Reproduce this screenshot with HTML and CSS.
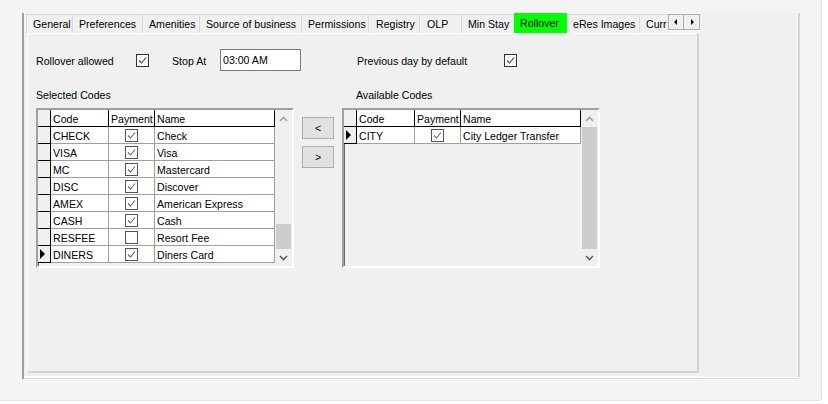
FILE: index.html
```html
<!DOCTYPE html>
<html>
<head>
<meta charset="utf-8">
<link rel="stylesheet" href="styles.css">
</head>
<body>
<div class="window">
  <div class="frame">
    <div class="tabctl">
      <div class="tabstrip">
        <div class="tabs">
          <span class="tab w-general">General</span>
          <span class="tab w-pref">Preferences</span>
          <span class="tab w-amen">Amenities</span>
          <span class="tab w-source">Source of business</span>
          <span class="tab w-perm">Permissions</span>
          <span class="tab w-reg">Registry</span>
          <span class="tab w-olp">OLP</span>
          <span class="tab w-min">Min Stay</span>
          <span class="tab w-roll active">Rollover</span>
          <span class="tab w-eres">eRes Images</span>
          <span class="tab w-curr">Curr</span>
        </div>
        <div class="tabarrows">
          <span class="tabarrow"><svg width="14" height="14" viewBox="0 0 14 14"><polygon points="8,4 8,10 5,7" fill="#000"/></svg></span>
          <span class="tabarrow"><svg width="14" height="14" viewBox="0 0 14 14"><polygon points="6,4 6,10 9,7" fill="#000"/></svg></span>
        </div>
      </div>
      <div class="page">
        <div class="toprow">
          <span class="lbl l-roll">Rollover allowed</span>
          <span class="cb"><svg width="11" height="11" viewBox="0 0 11 11"><polyline points="2,5.5 4.5,8 9,2.5" fill="none" stroke="#444" stroke-width="1.1"/></svg></span>
          <span class="lbl l-stop">Stop At</span>
          <span class="textbox">03:00 AM</span>
          <span class="lbl l-prev">Previous day by default</span>
          <span class="cb"><svg width="11" height="11" viewBox="0 0 11 11"><polyline points="2,5.5 4.5,8 9,2.5" fill="none" stroke="#444" stroke-width="1.1"/></svg></span>
        </div>
        <div class="lists">
          <div class="col">
            <div class="caption">Selected Codes</div>
            <div class="grid">
              <div class="gridbody">
                <div class="grow ghead"><span class="rh"></span><span class="c">Code</span><span class="c">Payment</span><span class="c">Name</span></div>
                <div class="grow"><span class="rh"></span><span class="c">CHECK</span><span class="c cbc"><span class="cb sm"><svg width="11" height="11" viewBox="0 0 11 11"><polyline points="2,5.5 4.5,8 9,2.5" fill="none" stroke="#666" stroke-width="1.1"/></svg></span></span><span class="c">Check</span></div>
                <div class="grow"><span class="rh"></span><span class="c">VISA</span><span class="c cbc"><span class="cb sm"><svg width="11" height="11" viewBox="0 0 11 11"><polyline points="2,5.5 4.5,8 9,2.5" fill="none" stroke="#666" stroke-width="1.1"/></svg></span></span><span class="c">Visa</span></div>
                <div class="grow"><span class="rh"></span><span class="c">MC</span><span class="c cbc"><span class="cb sm"><svg width="11" height="11" viewBox="0 0 11 11"><polyline points="2,5.5 4.5,8 9,2.5" fill="none" stroke="#666" stroke-width="1.1"/></svg></span></span><span class="c">Mastercard</span></div>
                <div class="grow"><span class="rh"></span><span class="c">DISC</span><span class="c cbc"><span class="cb sm"><svg width="11" height="11" viewBox="0 0 11 11"><polyline points="2,5.5 4.5,8 9,2.5" fill="none" stroke="#666" stroke-width="1.1"/></svg></span></span><span class="c">Discover</span></div>
                <div class="grow"><span class="rh"></span><span class="c">AMEX</span><span class="c cbc"><span class="cb sm"><svg width="11" height="11" viewBox="0 0 11 11"><polyline points="2,5.5 4.5,8 9,2.5" fill="none" stroke="#666" stroke-width="1.1"/></svg></span></span><span class="c">American Express</span></div>
                <div class="grow"><span class="rh"></span><span class="c">CASH</span><span class="c cbc"><span class="cb sm"><svg width="11" height="11" viewBox="0 0 11 11"><polyline points="2,5.5 4.5,8 9,2.5" fill="none" stroke="#666" stroke-width="1.1"/></svg></span></span><span class="c">Cash</span></div>
                <div class="grow"><span class="rh"></span><span class="c">RESFEE</span><span class="c cbc"><span class="cb sm"></span></span><span class="c">Resort Fee</span></div>
                <div class="grow"><span class="rh cur"><svg width="8" height="12" viewBox="0 0 8 12"><polygon points="2,1 7,6 2,11" fill="#000"/></svg></span><span class="c">DINERS</span><span class="c cbc"><span class="cb sm"><svg width="11" height="11" viewBox="0 0 11 11"><polyline points="2,5.5 4.5,8 9,2.5" fill="none" stroke="#666" stroke-width="1.1"/></svg></span></span><span class="c">Diners Card</span></div>
              </div>
              <div class="vscroll">
                <span class="sbtn"><svg width="9" height="6" viewBox="0 0 9 6"><polyline points="1,5 4.5,1.5 8,5" fill="none" stroke="#a0a0a0" stroke-width="1.6"/></svg></span>
                <span class="track"><span class="thumb"></span></span>
                <span class="sbtn"><svg width="9" height="6" viewBox="0 0 9 6"><polyline points="1,1 4.5,4.5 8,1" fill="none" stroke="#606060" stroke-width="1.6"/></svg></span>
              </div>
            </div>
          </div>
          <div class="movebtns">
            <span class="btn">&lt;</span>
            <span class="btn">&gt;</span>
          </div>
          <div class="col">
            <div class="caption cap-right">Available Codes</div>
            <div class="grid">
              <div class="gridbody">
                <div class="grow ghead"><span class="rh"></span><span class="c">Code</span><span class="c">Payment</span><span class="c">Name</span></div>
                <div class="grow"><span class="rh cur"><svg width="8" height="12" viewBox="0 0 8 12"><polygon points="2,1 7,6 2,11" fill="#000"/></svg></span><span class="c">CITY</span><span class="c cbc"><span class="cb sm"><svg width="11" height="11" viewBox="0 0 11 11"><polyline points="2,5.5 4.5,8 9,2.5" fill="none" stroke="#666" stroke-width="1.1"/></svg></span></span><span class="c">City Ledger Transfer</span></div>
              </div>
              <div class="vscroll">
                <span class="sbtn"><svg width="9" height="6" viewBox="0 0 9 6"><polyline points="1,5 4.5,1.5 8,5" fill="none" stroke="#a0a0a0" stroke-width="1.6"/></svg></span>
                <span class="track full"></span>
                <span class="sbtn"><svg width="9" height="6" viewBox="0 0 9 6"><polyline points="1,1 4.5,4.5 8,1" fill="none" stroke="#606060" stroke-width="1.6"/></svg></span>
              </div>
            </div>
          </div>
        </div>
      </div>
    </div>
    <div class="side"></div>
  </div>
</div>
</body>
</html>
```
FILE: styles.css
```css
* { box-sizing: border-box; }
html, body { margin: 0; padding: 0; }
body {
  background: #ffffff;
  font-family: "Liberation Sans", Arial, sans-serif;
  font-size: 10.6px;
  color: #000;
}
.window {
  width: 822px;
  height: 401px;
  background: #f4f4f4;
  border-right: 1px solid #e3e3e3;
  border-bottom: 1px solid #e3e3e3;
  border-bottom-right-radius: 3px;
  padding: 13px 0 0 22px;
}
.frame {
  display: flex;
  width: 778px;
  height: 366px;
  border-left: 2px solid #a0a0a0;
  background: #f0f0f0;
  box-shadow: inset 0 -1px 0 #dadada, inset 0 -3px 0 #ffffff;
}
.tabctl {
  width: 676px;
  display: flex;
  flex-direction: column;
}
.tabstrip {
  height: 20px;
  display: flex;
  padding-left: 2px;
  background: #f4f4f4;
}
.tabs {
  flex: 1;
  display: flex;
  overflow: hidden;
  white-space: nowrap;
  padding-top: 1px;
}
.tab {
  flex: none;
  height: 19px;
  line-height: 19px;
  padding-left: 6px;
  background: #f0f0f0;
  border: 1px solid #d9d9d9;
  border-left: none;
  border-bottom: none;
  overflow: hidden;
}
.tab:first-child { border-left: 1px solid #d9d9d9; }
.tab.active {
  background: #00ff00;
  border-color: #00ff00;
  margin-top: -1px;
  height: 20px;
  line-height: 19px;
}
.w-general { width: 47px; }
.w-pref { width: 70px; }
.w-amen { width: 57px; }
.w-source { width: 102px; }
.w-perm { width: 67px; }
.w-reg { width: 51px; padding-left: 7px; }
.w-olp { width: 42px; padding-left: 7px; }
.w-min { width: 52px; }
.w-roll { width: 53px; }
.w-eres { width: 73px; }
.w-curr { width: 40px; }
.tabarrows {
  display: flex;
  padding-top: 1px;
}
.tabarrow {
  width: 16px;
  height: 16px;
  border: 1px solid #adadad;
  background: #f0f0f0;
  display: flex;
  align-items: center;
  justify-content: center;
}
.tabarrow + .tabarrow { border-left: none; }
.page {
  flex: 1;
  margin-left: 3px;
  width: 672px;
  margin-bottom: 6px;
  border-top: 1px solid #ffffff;
  border-left: 1px solid #ffffff;
  border-right: 2px solid #d4d4d4;
  border-bottom: 2px solid #d4d4d4;
  background: #f0f0f0;
  padding-left: 8px;
}
.toprow {
  display: flex;
  align-items: center;
  height: 22px;
  margin-top: 15px;
}
.lbl { flex: none; padding-top: 1px; }
.l-roll { width: 100px; }
.l-stop { width: 48px; margin-left: 23px; }
.l-prev { width: 147px; margin-left: 56px; }
.cb {
  flex: none;
  width: 13px;
  height: 13px;
  border: 1px solid #333333;
  background: #ffffff;
  display: inline-flex;
  align-items: center;
  justify-content: center;
}
.cb.sm { border-color: #555555; }
.textbox {
  flex: none;
  width: 81px;
  height: 22px;
  border: 1px solid #7a7a7a;
  background: #ffffff;
  padding-left: 2px;
  line-height: 20px;
}
.lists {
  display: flex;
  margin-top: 17px;
}
.col { display: flex; flex-direction: column; }
.caption {
  height: 14px;
  line-height: 15px;
  margin-bottom: 6px;
}
.cap-right { padding-left: 14px; }
.grid {
  width: 258px;
  height: 160px;
  display: flex;
  background: #f0f0f0;
  border-top: 2px solid #a0a0a0;
  border-left: 2px solid #a0a0a0;
  border-right: 2px solid #ffffff;
  border-bottom: 2px solid #ffffff;
  box-shadow: inset 1px 1px 0 #696969;
}
.gridbody {
  width: 237px;
  display: flex;
  flex-direction: column;
}
.grow {
  display: grid;
  grid-template-columns: 13px 58px 46px 120px;
  height: 17px;
}
.grow .c {
  background: #ffffff;
  border-right: 1px solid #a0a0a0;
  border-bottom: 1px solid #a0a0a0;
  line-height: 18px;
  padding-left: 2px;
  white-space: nowrap;
  overflow: hidden;
}
.grow .rh {
  background: #f0f0f0;
  border-right: 1px solid #000;
  border-bottom: 1px solid #000;
  display: flex;
  align-items: center;
  justify-content: flex-start;
}
.ghead .c {
  background: #ffffff;
  border-right: 1px solid #000;
  border-bottom: 1px solid #000;
}
.ghead .rh { border-bottom: 1px solid #000; }
.grow .cbc {
  display: flex;
  align-items: center;
  justify-content: center;
  padding-left: 0;
}
.vscroll {
  width: 17px;
  display: flex;
  flex-direction: column;
  background: #f0f0f0;
}
.sbtn {
  height: 17px;
  display: flex;
  align-items: center;
  justify-content: center;
}
.track {
  flex: 1;
  display: flex;
  flex-direction: column;
  justify-content: flex-end;
  padding: 0 1px;
}
.thumb {
  height: 25px;
  background: #cdcdcd;
}
.track.full { background: #cdcdcd; margin: 0 1px; }
.movebtns {
  display: flex;
  flex-direction: column;
  gap: 7px;
  margin: 29px 8px 0 8px;
}
.btn {
  width: 32px;
  height: 22px;
  border: 1px solid #adadad;
  background: #e1e1e1;
  display: flex;
  align-items: center;
  justify-content: center;
}
.side {
  width: 97px;
  margin-left: 3px;
  margin-bottom: 2px;
  border-right: 2px solid #d4d4d4;
  box-shadow: inset -1px 0 0 #fff;
  background: #efefef;
}
```
